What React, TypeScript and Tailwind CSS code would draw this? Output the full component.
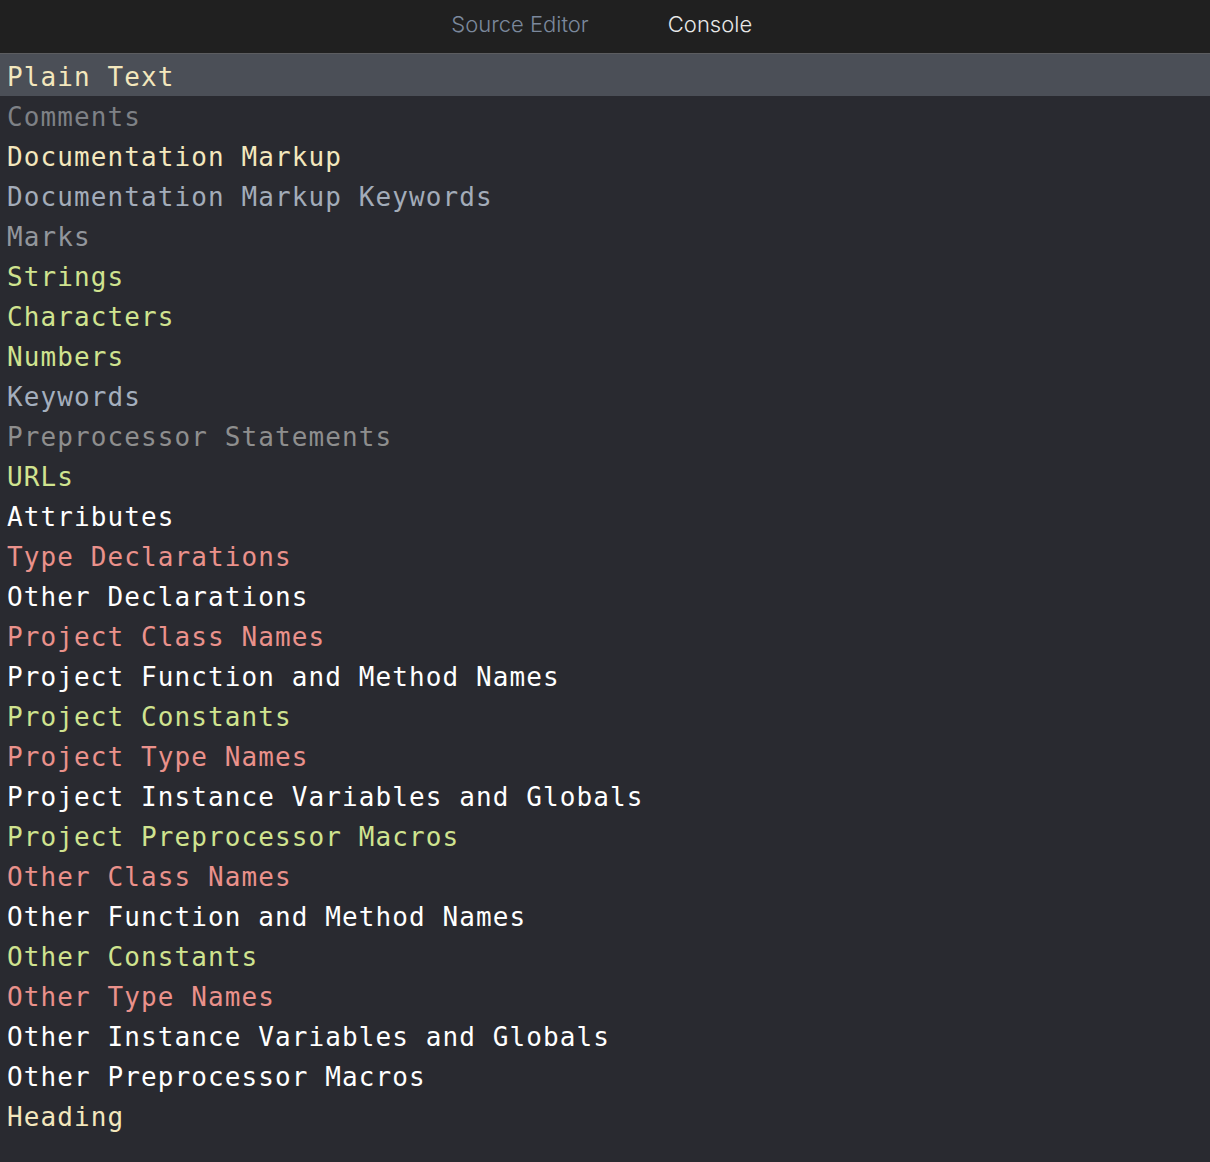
const PLAIN = 'text-[#f3e7bd]';
const GREEN = 'text-[#d0e38f]';
const PINK = 'text-[#ea918b]';
const WHITE = 'text-[#ffffff]';

const rows: { label: string; color: string }[] = [
  { label: 'Plain Text', color: PLAIN },
  { label: 'Comments', color: 'text-[#7e8186]' },
  { label: 'Documentation Markup', color: PLAIN },
  { label: 'Documentation Markup Keywords', color: 'text-[#a3acb9]' },
  { label: 'Marks', color: 'text-[#92969c]' },
  { label: 'Strings', color: GREEN },
  { label: 'Characters', color: GREEN },
  { label: 'Numbers', color: GREEN },
  { label: 'Keywords', color: 'text-[#a4afbe]' },
  { label: 'Preprocessor Statements', color: 'text-[#8e8e8e]' },
  { label: 'URLs', color: GREEN },
  { label: 'Attributes', color: WHITE },
  { label: 'Type Declarations', color: PINK },
  { label: 'Other Declarations', color: WHITE },
  { label: 'Project Class Names', color: PINK },
  { label: 'Project Function and Method Names', color: WHITE },
  { label: 'Project Constants', color: GREEN },
  { label: 'Project Type Names', color: PINK },
  { label: 'Project Instance Variables and Globals', color: WHITE },
  { label: 'Project Preprocessor Macros', color: GREEN },
  { label: 'Other Class Names', color: PINK },
  { label: 'Other Function and Method Names', color: WHITE },
  { label: 'Other Constants', color: GREEN },
  { label: 'Other Type Names', color: PINK },
  { label: 'Other Instance Variables and Globals', color: WHITE },
  { label: 'Other Preprocessor Macros', color: WHITE },
  { label: 'Heading', color: PLAIN },
];

export default function App() {
  return (
    <div className="min-h-[1162px] w-full bg-[#292a30]">
      {/* Tabs */}
      <div className="flex h-[53px] items-center justify-center bg-[#202020] pb-[5px] pl-[20px] font-['Inter',sans-serif] text-[22px] font-light">
        <div className="w-[190px] text-center text-[#7b889c]">Source Editor</div>
        <div className="w-[190px] text-center text-[#e8e8e8]">Console</div>
      </div>
      <div className="h-px bg-[#5c5d60]" />

      {/* Font & colour list */}
      <div className="font-['DejaVu_Sans_Mono',monospace] text-[26px] tracking-[1.1px]">
        {rows.map((row, i) => (
          <div
            key={row.label}
            className={
              i === 0
                ? `flex h-[42px] items-center whitespace-pre bg-[#4b4f57] pl-[7px] pt-[4px] ${row.color}`
                : `flex h-[40px] items-center whitespace-pre pl-[7px] pt-[2px] ${row.color}`
            }
          >
            {row.label}
          </div>
        ))}
      </div>
    </div>
  );
}
